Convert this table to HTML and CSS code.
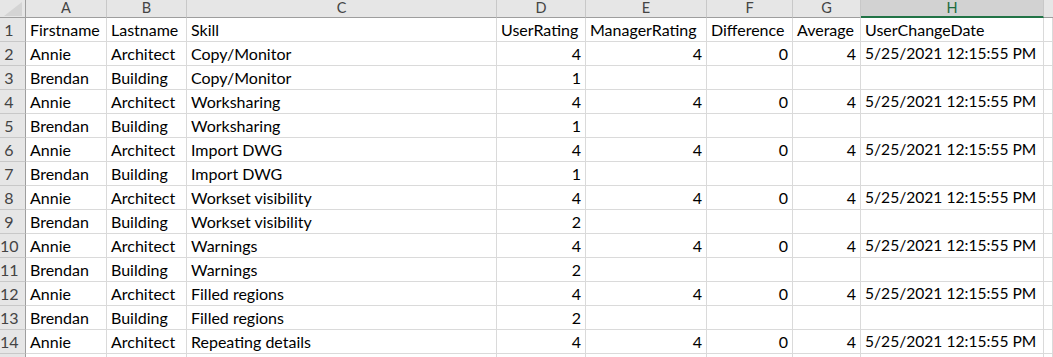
FILE: index.html
```html
<!DOCTYPE html>
<html>
<head>
<meta charset="utf-8">
<link rel="stylesheet" href="styles.css">
</head>
<body>
<div class="sheet">
  <div class="corner"><svg width="18" height="14" viewBox="0 0 18 14"><polygon points="18,0 18,14 0,14" fill="#d4d4d4"/></svg></div>
  <div class="ch">A</div><div class="ch">B</div><div class="ch">C</div><div class="ch">D</div><div class="ch">E</div><div class="ch">F</div><div class="ch">G</div><div class="ch sel">H</div><div class="ch last"></div>

  <div class="rh">1</div><div class="c">Firstname</div><div class="c">Lastname</div><div class="c">Skill</div><div class="c">UserRating</div><div class="c">ManagerRating</div><div class="c">Difference</div><div class="c">Average</div><div class="c">UserChangeDate</div><div class="c"></div>

  <div class="rh">2</div><div class="c">Annie</div><div class="c">Architect</div><div class="c">Copy/Monitor</div><div class="c n">4</div><div class="c n">4</div><div class="c n">0</div><div class="c n">4</div><div class="c d">5/25/2021 12:15:55 PM</div><div class="c"></div>

  <div class="rh">3</div><div class="c">Brendan</div><div class="c">Building</div><div class="c">Copy/Monitor</div><div class="c n">1</div><div class="c"></div><div class="c"></div><div class="c"></div><div class="c"></div><div class="c"></div>

  <div class="rh">4</div><div class="c">Annie</div><div class="c">Architect</div><div class="c">Worksharing</div><div class="c n">4</div><div class="c n">4</div><div class="c n">0</div><div class="c n">4</div><div class="c d">5/25/2021 12:15:55 PM</div><div class="c"></div>

  <div class="rh">5</div><div class="c">Brendan</div><div class="c">Building</div><div class="c">Worksharing</div><div class="c n">1</div><div class="c"></div><div class="c"></div><div class="c"></div><div class="c"></div><div class="c"></div>

  <div class="rh">6</div><div class="c">Annie</div><div class="c">Architect</div><div class="c">Import DWG</div><div class="c n">4</div><div class="c n">4</div><div class="c n">0</div><div class="c n">4</div><div class="c d">5/25/2021 12:15:55 PM</div><div class="c"></div>

  <div class="rh">7</div><div class="c">Brendan</div><div class="c">Building</div><div class="c">Import DWG</div><div class="c n">1</div><div class="c"></div><div class="c"></div><div class="c"></div><div class="c"></div><div class="c"></div>

  <div class="rh">8</div><div class="c">Annie</div><div class="c">Architect</div><div class="c">Workset visibility</div><div class="c n">4</div><div class="c n">4</div><div class="c n">0</div><div class="c n">4</div><div class="c d">5/25/2021 12:15:55 PM</div><div class="c"></div>

  <div class="rh">9</div><div class="c">Brendan</div><div class="c">Building</div><div class="c">Workset visibility</div><div class="c n">2</div><div class="c"></div><div class="c"></div><div class="c"></div><div class="c"></div><div class="c"></div>

  <div class="rh">10</div><div class="c">Annie</div><div class="c">Architect</div><div class="c">Warnings</div><div class="c n">4</div><div class="c n">4</div><div class="c n">0</div><div class="c n">4</div><div class="c d">5/25/2021 12:15:55 PM</div><div class="c"></div>

  <div class="rh">11</div><div class="c">Brendan</div><div class="c">Building</div><div class="c">Warnings</div><div class="c n">2</div><div class="c"></div><div class="c"></div><div class="c"></div><div class="c"></div><div class="c"></div>

  <div class="rh">12</div><div class="c">Annie</div><div class="c">Architect</div><div class="c">Filled regions</div><div class="c n">4</div><div class="c n">4</div><div class="c n">0</div><div class="c n">4</div><div class="c d">5/25/2021 12:15:55 PM</div><div class="c"></div>

  <div class="rh">13</div><div class="c">Brendan</div><div class="c">Building</div><div class="c">Filled regions</div><div class="c n">2</div><div class="c"></div><div class="c"></div><div class="c"></div><div class="c"></div><div class="c"></div>

  <div class="rh">14</div><div class="c">Annie</div><div class="c">Architect</div><div class="c">Repeating details</div><div class="c n">4</div><div class="c n">4</div><div class="c n">0</div><div class="c n">4</div><div class="c d">5/25/2021 12:15:55 PM</div><div class="c"></div>

  <div class="rh"></div><div class="c"></div><div class="c"></div><div class="c"></div><div class="c"></div><div class="c"></div><div class="c"></div><div class="c"></div><div class="c"></div><div class="c"></div>
</div>
</body>
</html>
```
FILE: styles.css
```css
html, body {
  margin: 0;
  padding: 0;
  background: #ffffff;
  overflow: hidden;
}
.sheet {
  display: grid;
  grid-template-columns: 26px 81px 80px 310px 89px 121px 86px 68px 183px 1fr;
  grid-template-rows: 18px repeat(15, 24px);
  font-family: "Lato", "Liberation Sans", sans-serif;
  font-size: 16px;
  color: #000;
  width: 1053px;
  height: 357px;
  overflow: hidden;
}
.sheet > div {
  box-sizing: border-box;
  white-space: nowrap;
}
.corner {
  background: #e6e6e6;
  border-right: 1px solid #9e9e9e;
  border-bottom: 1px solid #9e9e9e;
  display: flex;
  align-items: flex-start;
  justify-content: flex-end;
  padding: 2px 3px 0 0;
}
.corner svg { display: block; }
.ch {
  background: #e6e6e6;
  color: #444;
  text-align: center;
  font-size: 14.5px;
  line-height: 13px;
  padding-top: 1px;
  border-right: 1px solid #c8c8c8;
  border-bottom: 1px solid #9e9e9e;
}
.ch.sel {
  background: #d2d2d2;
  color: #1e6b40;
  border-bottom: 2px solid #217346;
}
.ch.last { border-right: none; }
.rh {
  background: #e6e6e6;
  color: #444;
  text-align: center;
  padding-right: 7px;
  line-height: 23px;
  border-right: 1px solid #9e9e9e;
  border-bottom: 1px solid #c8c8c8;
}
.c {
  padding: 0 4px;
  line-height: 23px;
  overflow: hidden;
  border-right: 1px solid #dadada;
  border-bottom: 1px solid #dadada;
}
.c.n { text-align: right; }
.c.d { font-size: 15.6px; }
```
